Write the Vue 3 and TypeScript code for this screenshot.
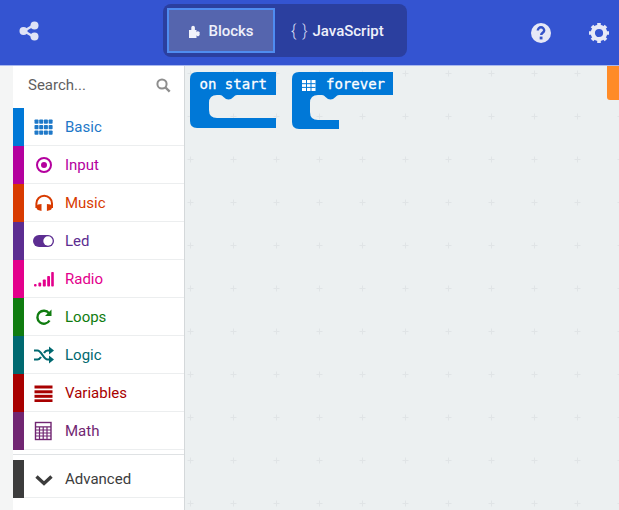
<script setup lang="ts">
const rows = [
  { name: 'Basic', color: '#1e78c8', bar: '#0078d7', icon: 'basic' },
  { name: 'Input', color: '#b4009e', bar: '#b4009e', icon: 'input' },
  { name: 'Music', color: '#d83b01', bar: '#d83b01', icon: 'music' },
  { name: 'Led', color: '#5c2d91', bar: '#5c2d91', icon: 'led' },
  { name: 'Radio', color: '#e3008c', bar: '#e3008c', icon: 'radio' },
  { name: 'Loops', color: '#107c10', bar: '#107c10', icon: 'loops' },
  { name: 'Logic', color: '#006970', bar: '#006970', icon: 'logic' },
  { name: 'Variables', color: '#a80000', bar: '#a80000', icon: 'variables' },
  { name: 'Math', color: '#712672', bar: '#712672', icon: 'math' },
]
const dots = [0, 1, 2, 3]
</script>

<template>
  <div class="app">
    <header class="top">
      <svg class="share" width="22" height="22" viewBox="0 0 22 22">
        <path d="M16 5 6 11l10 6" fill="none" stroke="#dfe3f6" stroke-width="2.4" />
        <circle cx="16.500" cy="5.500" r="4" fill="#dfe3f6" />
        <circle cx="5.500" cy="11" r="4" fill="#dfe3f6" />
        <circle cx="16.500" cy="16.500" r="4" fill="#dfe3f6" />
      </svg>
      <div class="switch">
        <div class="tab active">
          <svg width="12" height="14" viewBox="0 0 12 14">
            <path d="M1 14V6h2.300V3.500a1.800 1.800 0 0 1 3.600 0V6h1.600V8.200a1.500 1.500 0 0 1 3 1.500 1.500 1.500 0 0 1-3 1.500V14z" fill="#f2f3fa" />
          </svg>
          <span>Blocks</span>
        </div>
        <div class="tab second">
          <span class="braces">{ }</span>
          <span>JavaScript</span>
        </div>
      </div>
      <div class="right">
        <svg width="22" height="22" viewBox="0 0 22 22">
          <circle cx="11" cy="11" r="10" fill="#e6e8f6" />
          <path d="M7.800 8.500a3.200 3.200 0 0 1 6.400 0c0 2.200-3 2.400-3 4.500" fill="none" stroke="#3452c8" stroke-width="2.400" />
          <rect x="9.700" y="14.600" width="2.800" height="2.800" fill="#3452c8" />
        </svg>
        <svg width="22" height="22" viewBox="0 0 22 22">
          <circle cx="11" cy="11" r="6.200" fill="none" stroke="#e6e8f6" stroke-width="4.200" />
          <path d="M11 1v20M1 11h20M4 4l14 14M18 4 4 18" stroke="#e6e8f6" stroke-width="3.600" stroke-dasharray="3.600 12.800 3.600" />
        </svg>
      </div>
    </header>

    <div class="body">
      <aside class="side">
        <div class="search">
          <span>Search...</span>
          <svg width="15" height="15" viewBox="0 0 15 15">
            <circle cx="6" cy="6" r="4.600" fill="none" stroke="#8e8e8e" stroke-width="2" />
            <path d="m9.500 9.500 4.200 4.200" stroke="#8e8e8e" stroke-width="2.400" />
          </svg>
        </div>
        <div v-for="r in rows" :key="r.name" class="row" :style="{ color: r.color }">
          <i class="bar" :style="{ background: r.bar }"></i>
          <span class="ico">
            <svg width="22" height="20" viewBox="0 0 22 20" fill="currentColor">
              <g v-if="r.icon === 'basic'">
                <template v-for="y in [2.500, 8, 13.500]" :key="y">
                  <rect v-for="x in dots" :key="x" :x="1.500 + x * 4.700" :y="y" width="4" height="4.300" rx=".8" />
                </template>
              </g>
              <g v-else-if="r.icon === 'input'">
                <circle cx="11" cy="10" r="7" fill="none" stroke="currentColor" stroke-width="2" />
                <circle cx="11" cy="10" r="3" />
              </g>
              <g v-else-if="r.icon === 'music'">
                <path d="M3.400 15V10.500a7.800 7.800 0 0 1 15.600 0V15" fill="none" stroke="currentColor" stroke-width="2" />
                <path d="M8.500 11v7L5 17c-2-.8-2-4.800 0-5.500zM13.900 11v7l3.500-1c2-.8 2-4.800 0-5.500z" />
              </g>
              <g v-else-if="r.icon === 'led'">
                <rect x="0" y="4" width="21" height="12" rx="6" />
                <circle cx="15" cy="10" r="4.700" fill="#fff" />
              </g>
              <g v-else-if="r.icon === 'radio'">
                <rect x="1" y="15" width="2.600" height="2.600" rx="1" />
                <rect x="5.400" y="13.500" width="2.800" height="4" rx="1" />
                <rect x="9.800" y="10.500" width="3" height="7" rx=".8" />
                <rect x="14.200" y="7" width="2.800" height="10.500" rx=".8" />
                <rect x="18.200" y="3" width="2.600" height="14.500" rx=".8" />
              </g>
              <g v-else-if="r.icon === 'loops'">
                <path d="M16.500 13.500a6.500 6.500 0 1 1-.5-7.300" fill="none" stroke="currentColor" stroke-width="2.400" />
                <path d="M18.500 2.500v6.500h-6.500z" />
              </g>
              <g v-else-if="r.icon === 'logic'">
                <path d="M1 5.500h3.500c4 0 6 9 10 9H17M1 14.500h3.500c1.500 0 2.500-1 3.500-2.500M11 8c1-1.500 2-2.500 3.500-2.500H17" fill="none" stroke="currentColor" stroke-width="2.200" />
                <path d="m16 1.500 5 4-5 4zM16 10.500l5 4-5 4z" />
              </g>
              <g v-else-if="r.icon === 'variables'">
                <rect x="1.500" y="2.500" width="18" height="3" />
                <rect x="1.500" y="7.300" width="18" height="3" />
                <rect x="1.500" y="11.800" width="18" height="3" />
                <rect x="1.500" y="16.300" width="18" height="2.700" />
              </g>
              <g v-else-if="r.icon === 'math'">
                <rect x="2.500" y="1.500" width="15.500" height="17" fill="none" stroke="currentColor" stroke-width="1.400" />
                <path d="M2.500 5.800h15.500M2.500 9h15.500M2.500 12h15.500M2.500 15h15.500M6.500 6v12M10.200 6v12M14 6v12" stroke="currentColor" stroke-width="1.200" />
              </g>
            </svg>
          </span>
          <span class="label">{{ r.name }}</span>
        </div>
        <div class="sep"></div>
        <div class="row adv">
          <i class="bar" style="background: #3c3c3c"></i>
          <span class="ico">
            <svg width="22" height="20" viewBox="0 0 22 20">
              <path d="m3.500 7.500 7.500 7 7.500-7" fill="none" stroke="#3c3c3c" stroke-width="3.400" />
            </svg>
          </span>
          <span class="label">Advanced</span>
        </div>
      </aside>

      <main class="canvas">
        <svg class="grid" width="435" height="445">
          <defs>
            <pattern id="plus" x="-15" y="-14" width="43" height="43" patternUnits="userSpaceOnUse">
              <path d="M20.500 18.500v6M17.500 21.500h6" stroke="#e0e4e6" stroke-width="1" />
            </pattern>
          </defs>
          <rect width="435" height="445" fill="url(#plus)" />
        </svg>
        <svg class="block b1" width="88" height="58" viewBox="0 0 88 58">
          <path
            d="M7 0H86V23H47q-2 0-3.500 2-2.500 2.500-5 2.500t-5-2.500Q32 23 30 23H27q-8 0-8 8V38q0 8 8 8H86V56H7Q0 56 0 49V7Q0 0 7 0Z"
            fill="#0078d7"
          />
          <text x="9.500" y="17" class="bt">on start</text>
        </svg>
        <svg class="block b2" width="103" height="60" viewBox="0 0 103 60">
          <path
            d="M7 0H101V23H47q-2 0-3.500 2-2.500 2.500-5 2.500t-5-2.500Q32 23 30 23H26q-8 0-8 8V40q0 8 8 8H47V57H7Q0 57 0 50V7Q0 0 7 0Z"
            fill="#0078d7"
          />
          <rect x="10" y="8" width="13.500" height="11" fill="#fff" />
          <path d="M10 11.700h13.500M10 15.400h13.500M14.500 8v11M19 8v11" stroke="#0078d7" stroke-width="1" />
          <text x="34" y="17" class="bt">forever</text>
        </svg>
        <div class="orange"></div>
      </main>
    </div>
  </div>
</template>

<style scoped>
.app {
  width: 619px;
  height: 510px;
  display: flex;
  flex-direction: column;
  overflow: hidden;
  font-family: Roboto, "Liberation Sans", sans-serif;
  background: #eef1f2;
}
.top {
  height: 65px;
  flex: none;
  background: #3454d1;
  border-bottom: 1px solid #a9b8ee;
  box-sizing: content-box;
  display: flex;
  align-items: center;
  padding: 0 9px 0 18px;
}
.share {
  margin-top: -3px;
}
.switch {
  margin-left: 123px;
  width: 244px;
  height: 53px;
  box-sizing: border-box;
  padding: 4px;
  background: #2b3f9f;
  border-radius: 8px;
  display: flex;
  margin-top: -4px;
}
.tab {
  height: 45px;
  display: flex;
  align-items: center;
  justify-content: center;
  gap: 8px;
  color: #eef0fa;
  font-size: 15px;
  font-weight: 500;
  padding: 0 12px;
}
.tab.active {
  width: 108px;
  box-sizing: border-box;
  background: #5565ae;
  border: 2px solid #4f8cf0;
}
.tab.second {
  padding-left: 16px;
  gap: 4px;
}
.braces {
  font-weight: 300;
  font-size: 16px;
  letter-spacing: 1px;
  color: #d7dcf2;
}
.right {
  margin-left: auto;
  display: flex;
  gap: 36px;
}
.body {
  flex: 1;
  min-height: 0;
  display: flex;
  background: #f4f5f5;
  padding-left: 13px;
}
.side {
  width: 171px;
  flex: none;
  background: #fff;
  border-right: 1px solid #d4d8da;
  box-sizing: content-box;
}
.search {
  height: 42px;
  box-sizing: border-box;
  display: flex;
  align-items: center;
  justify-content: space-between;
  padding: 0 13px 4px 15px;
  font-size: 15px;
  color: #5f5f5f;
}
.row {
  height: 38px;
  box-sizing: border-box;
  display: flex;
  align-items: center;
  border-bottom: 1px solid #eceeef;
  font-size: 15px;
}
.bar {
  width: 11px;
  height: 38px;
  flex: none;
  align-self: flex-start;
}
.ico {
  width: 22px;
  height: 20px;
  margin-left: 9px;
  display: block;
}
.label {
  margin-left: 10px;
}
.sep {
  height: 5px;
  border-bottom: 1px solid #dfe2e4;
  margin-bottom: 5px;
  box-sizing: border-box;
}
.adv {
  color: #3c3c3c;
}
.canvas {
  flex: 1;
  position: relative;
  background: #ecf0f1;
}
.grid {
  position: absolute;
  left: 0;
  top: 0;
}
.block {
  position: absolute;
}
.b1 {
  left: 5px;
  top: 6px;
}
.b2 {
  left: 107px;
  top: 6px;
}
.bt {
  font-family: "DejaVu Sans Mono", monospace;
  font-size: 14px;
  fill: #fff;
  stroke: #fff;
  stroke-width: 0.3px;
}
.orange {
  position: absolute;
  right: 0;
  top: 0;
  width: 12px;
  height: 34px;
  background: #ff8b27;
  border-bottom-left-radius: 3px;
}
</style>
